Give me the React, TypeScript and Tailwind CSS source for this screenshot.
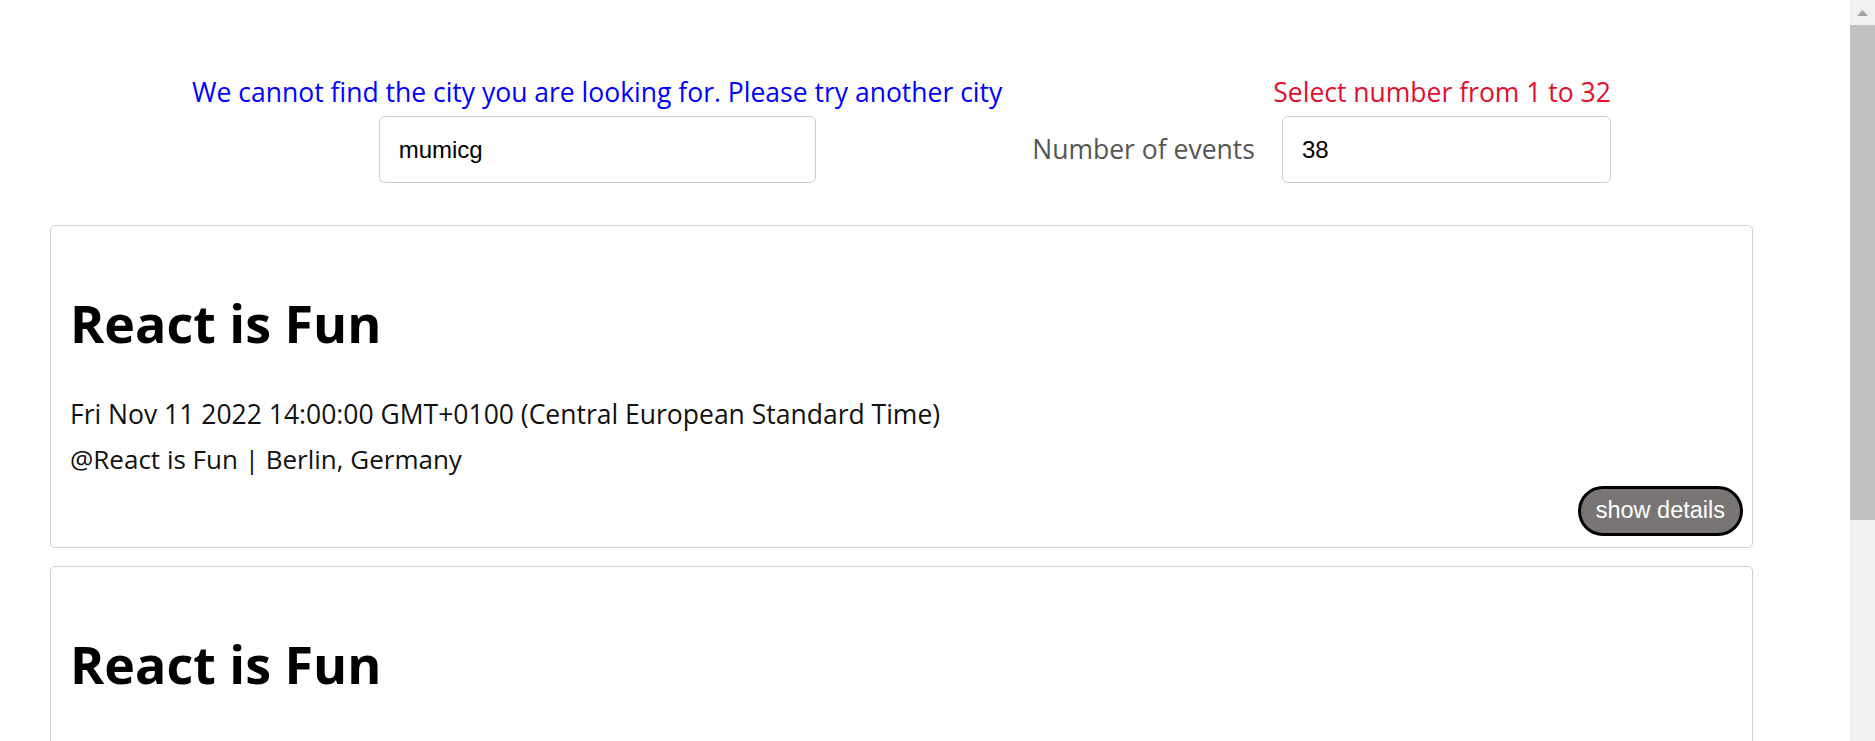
import React from "react";

function Scrollbar() {
  return (
    <div className="flex h-full w-[25px] shrink-0 flex-col bg-[#f0f0f0]">
      <div className="flex h-[25px] items-center justify-center">
        <svg width="11" height="6" viewBox="0 0 11 6">
          <path d="M0 6 L5.5 0 L11 6 Z" fill="#a3a3a3" />
        </svg>
      </div>
      <div className="h-[495px] w-full bg-[#c1c1c1]" />
    </div>
  );
}

function EventCard({ showDetails }: { showDetails: boolean }) {
  return (
    <div className="mb-[18px] rounded-[5px] border border-[#d0d0d0] pt-[63px] pb-[11px] pl-[19px] pr-[9px]">
      <div className="h-[68px] text-[52px] font-bold leading-[68px] text-black">React is Fun</div>
      <div className="mt-[35px] text-[26.5px] leading-[45px] text-[#111]">
        Fri Nov 11 2022 14:00:00 GMT+0100 (Central European Standard Time)
      </div>
      <div className="text-[26px] leading-[45px] text-[#111]">@React is Fun | Berlin, Germany</div>
      {showDetails && (
        <div className="mt-[4px] flex justify-end">
          <button className="h-[50px] rounded-full border-[3px] border-black bg-[#787574] px-[15px] font-['Liberation_Sans',Arial,sans-serif] text-[23.5px] leading-none text-white">
            show details
          </button>
        </div>
      )}
    </div>
  );
}

export default function App() {
  return (
    <div className="flex h-[741px] w-full overflow-hidden bg-white font-['Open_Sans',sans-serif]">
      <div className="min-w-0 flex-1 overflow-hidden pt-[77px] pl-[50px] pr-[97px]">
        <div className="flex justify-center gap-[30px]">
          <div className="flex flex-col items-center">
            <div className="text-[26.5px] leading-[30px] text-[#0000ff]">
              We cannot find the city you are looking for. Please try another city
            </div>
            <input
              readOnly
              value="mumicg"
              className="mt-[9px] h-[67px] w-[437px] rounded-[6px] border border-[#cccccc] pl-[19px] font-['Liberation_Sans',Arial,sans-serif] text-[24px] text-black outline-none"
            />
          </div>
          <div className="flex flex-col items-end">
            <div className="text-[26.5px] leading-[30px] text-[#e0102e]">Select number from 1 to 32</div>
            <div className="mt-[9px] flex items-center gap-[27px]">
              <span className="text-[26.5px] text-[#555555]">Number of events</span>
              <input
                readOnly
                value="38"
                className="h-[67px] w-[329px] rounded-[6px] border border-[#cccccc] pl-[19px] font-['Liberation_Sans',Arial,sans-serif] text-[24px] text-black outline-none"
              />
            </div>
          </div>
        </div>
        <div className="mt-[42px]">
          <EventCard showDetails />
          <EventCard showDetails={false} />
        </div>
      </div>
      <Scrollbar />
    </div>
  );
}
